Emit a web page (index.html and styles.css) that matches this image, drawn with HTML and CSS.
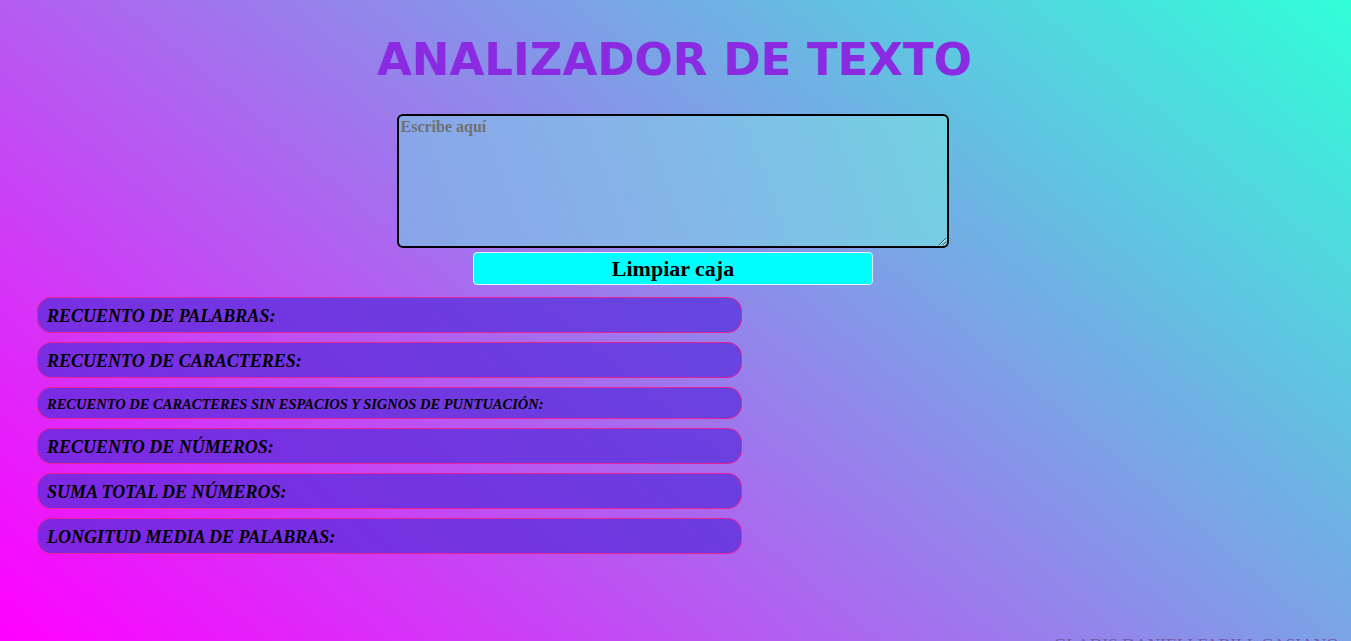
FILE: index.html
```html
<!DOCTYPE html>
<html lang="es">
<head>
<meta charset="utf-8">
<title>Analizador de texto</title>
<link rel="stylesheet" href="styles.css">
</head>
<body>
<header class="header">
  <h1 class="title">ANALIZADOR DE TEXTO</h1>
</header>
<main class="main">
  <section class="editor">
    <textarea class="input" placeholder="Escribe aquí"></textarea>
    <button class="clear-btn" type="button">Limpiar caja</button>
  </section>
  <ul class="results">
    <li class="metric">RECUENTO DE PALABRAS:</li>
    <li class="metric">RECUENTO DE CARACTERES:</li>
    <li class="metric metric--small">RECUENTO DE CARACTERES SIN ESPACIOS Y SIGNOS DE PUNTUACIÓN:</li>
    <li class="metric">RECUENTO DE NÚMEROS:</li>
    <li class="metric">SUMA TOTAL DE NÚMEROS:</li>
    <li class="metric">LONGITUD MEDIA DE PALABRAS:</li>
  </ul>
</main>
<footer class="footer">GLADIS DANIELI FABILL CASIANO</footer>
</body>
</html>
```
FILE: styles.css
```css
html {
  height: 100%;
  overflow: hidden;
}
body {
  margin: 0;
  width: 1349px;
  min-height: 100%;
  background: linear-gradient(40deg, #ff00ff 0%, #30ffd8 100%);
  font-family: "Liberation Serif", "DejaVu Serif", serif;
}
.header {
  padding-top: 32px;
  text-align: center;
}
.title {
  margin: 0;
  font-family: "DejaVu Sans", Verdana, sans-serif;
  font-weight: bold;
  font-size: 45px;
  line-height: 55px;
  color: #8a2be2;
}
.editor {
  margin-top: 27px;
  display: flex;
  flex-direction: column;
  align-items: center;
  gap: 4px;
}
.input {
  box-sizing: border-box;
  width: 552px;
  height: 134px;
  margin-left: -4px;
  padding: 2px;
  border: 2px solid #000;
  border-radius: 6px;
  background: linear-gradient(70deg, #8aa4e8 0%, #84b6e8 50%, #72d2e2 100%);
  font-family: "Liberation Serif", serif;
  font-weight: bold;
  font-size: 16px;
  color: #000;
  outline: none;
}
.input::placeholder {
  color: #707070;
}
.clear-btn {
  box-sizing: border-box;
  width: 400px;
  height: 33px;
  margin-left: -3px;
  padding-top: 2px;
  border: 1px solid #e8f4ff;
  border-radius: 4px;
  background: #00ffff;
  font-family: "Liberation Serif", serif;
  font-weight: bold;
  font-size: 22px;
  color: #000;
}
.results {
  list-style: none;
  margin: 12px 0 0 37px;
  padding: 0;
  width: 705px;
  display: flex;
  flex-direction: column;
  gap: 9px;
}
.metric {
  box-sizing: border-box;
  height: 36px;
  display: flex;
  align-items: center;
  padding: 2px 9px 0;
  border: 1px solid #e8209a;
  border-radius: 14px;
  background: rgba(85, 45, 218, 0.72);
  font-style: italic;
  font-weight: bold;
  font-size: 18px;
  color: #000;
}
.metric--small {
  height: 32px;
  font-size: 14.5px;
}
.footer {
  margin-top: 80px;
  padding-right: 10px;
  text-align: right;
  font-size: 17.5px;
  color: #6f5aa8;
}
```
